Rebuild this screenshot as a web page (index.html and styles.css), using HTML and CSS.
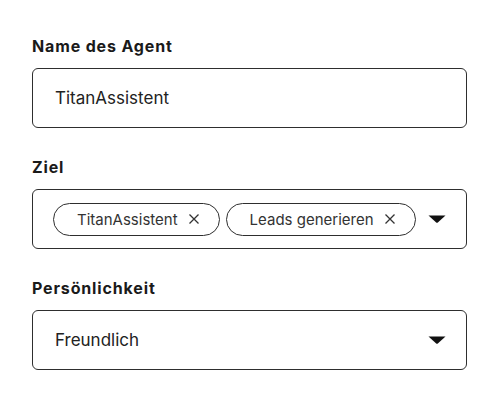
FILE: index.html
```html
<!DOCTYPE html>
<html lang="de">
<head>
<meta charset="utf-8">
<link rel="stylesheet" href="styles.css">
</head>
<body>
<form class="form">
  <div class="field">
    <label class="label">Name des Agent</label>
    <div class="box"><span class="value">TitanAssistent</span></div>
  </div>
  <div class="field">
    <label class="label">Ziel</label>
    <div class="box box-select">
      <div class="chips">
        <span class="chip">TitanAssistent <svg class="x" viewBox="0 0 12 12"><path d="M1.5 1.5 L10.5 10.5 M10.5 1.5 L1.5 10.5"/></svg></span>
        <span class="chip">Leads generieren <svg class="x" viewBox="0 0 12 12"><path d="M1.5 1.5 L10.5 10.5 M10.5 1.5 L1.5 10.5"/></svg></span>
      </div>
      <svg class="caret" viewBox="0 0 18 8"><path d="M0.5 0.5 H17.5 L9.8 7.4 Q9 8 8.2 7.4 Z"/></svg>
    </div>
  </div>
  <div class="field">
    <label class="label">Persönlichkeit</label>
    <div class="box box-select">
      <span class="value">Freundlich</span>
      <svg class="caret" viewBox="0 0 18 8"><path d="M0.5 0.5 H17.5 L9.8 7.4 Q9 8 8.2 7.4 Z"/></svg>
    </div>
  </div>
</form>
</body>
</html>
```
FILE: styles.css
```css
* { box-sizing: border-box; }
html, body { margin: 0; background: #fff; }
body { font-family: Inter, "Noto Sans", sans-serif; color: #1e1e1e; }
.form { padding: 36px 33px 0 32px; display: flex; flex-direction: column; gap: 29px; }
.field { display: flex; flex-direction: column; gap: 12px; }
.label { font-size: 16px; font-weight: 700; line-height: 20px; letter-spacing: 0.85px; color: #1a1a1a; }
.box { height: 60px; border: 1.5px solid #2e2e2e; border-radius: 6px; display: flex; align-items: center; padding: 0 20px 0 22px; }
.value { font-size: 17px; line-height: 20px; color: #222; }
.box-select { justify-content: space-between; }
.box-select:has(.chips) { padding-left: 20px; }
.chips { display: flex; gap: 6px; }
.chip { height: 33px; border: 1.5px solid #2e2e2e; border-radius: 17px; display: flex; align-items: center; gap: 10px; padding: 0 19px 0 23px; font-size: 15px; color: #333; }
.x { width: 12px; height: 12px; fill: none; stroke: #333; stroke-width: 1.3; }
.caret { width: 18px; height: 8px; fill: #111; flex: none; }
```
